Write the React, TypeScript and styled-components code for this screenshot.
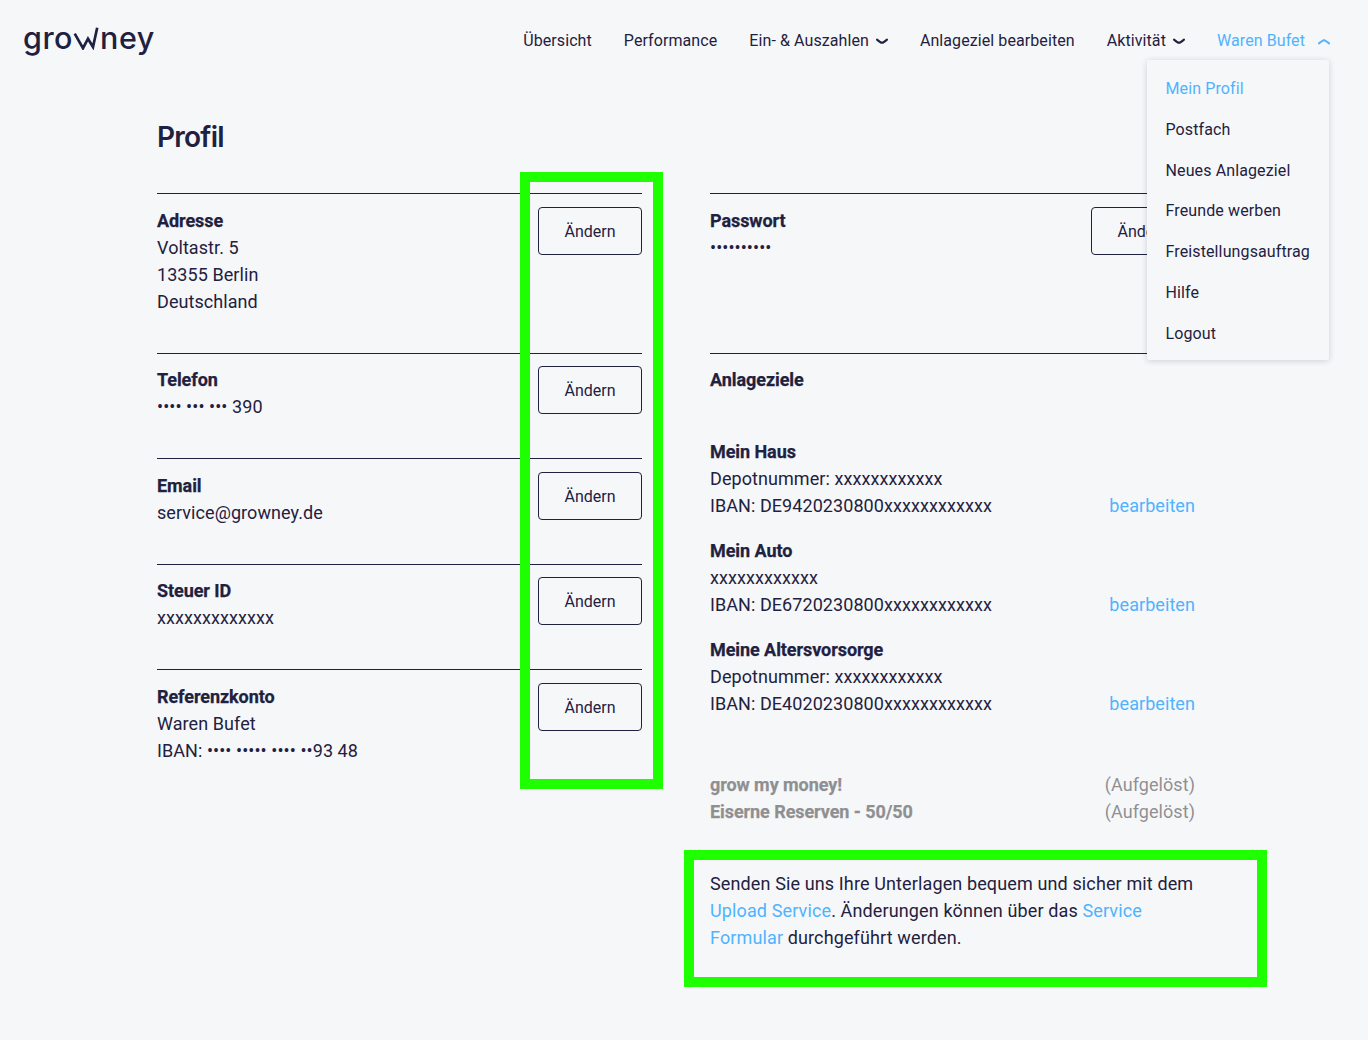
import React from "react";
import styled, { createGlobalStyle } from "styled-components";

const ink = "#1f2140";
const sky = "#4fb3ff";
const paper = "#f6f7f9";

const Global = createGlobalStyle`
  html, body { margin: 0; padding: 0; background: ${paper}; }
  body { font-family: Roboto, "Liberation Sans", sans-serif; color: ${ink}; }
  * { box-sizing: border-box; }
`;

const Page = styled.div`
  position: relative;
  width: 1368px;
  height: 1040px;
  overflow: hidden;
  background: ${paper};
`;

const Header = styled.header`
  display: flex;
  align-items: center;
  justify-content: space-between;
  height: 80px;
  padding: 0 38px 0 23px;
`;

const Logo = styled.div`
  display: flex;
  align-items: baseline;
  padding-bottom: 5px;
  font-family: Inter, sans-serif;
  font-size: 30.5px;
  font-weight: 500;
  line-height: 40px;
  color: ${ink};
  letter-spacing: 0.5px;
`;

const LogoW = styled.svg`
  width: 26px;
  height: 26px;
  margin: 0 1px 0 0;
  transform: translateY(1px);
`;

const Nav = styled.nav`
  display: flex;
  gap: 32px;
  margin-top: 2px;
  font-size: 16px;
  line-height: 24px;
  letter-spacing: 0.085px;
`;

const NavItem = styled.a<{ $active?: boolean }>`
  display: flex;
  align-items: center;
  color: ${(p) => (p.$active ? sky : ink)};
`;

const Chevron = styled.svg<{ $gap: number }>`
  width: 12px;
  height: 7px;
  margin-left: ${(p) => p.$gap}px;
  margin-top: 1px;
`;

const Menu = styled.ul`
  position: absolute;
  top: 60px;
  left: 1147px;
  width: 182px;
  height: 300px;
  margin: 0;
  padding: 9px 0 0 18.5px;
  list-style: none;
  background: ${paper};
  border-radius: 2px;
  box-shadow: 0 1px 6px rgba(31, 33, 64, 0.18);
  z-index: 2;
`;

const MenuItem = styled.li<{ $active?: boolean }>`
  height: 40.8px;
  line-height: 40.8px;
  font-size: 16px;
  letter-spacing: 0.12px;
  white-space: nowrap;
  color: ${(p) => (p.$active ? sky : ink)};
`;

const Main = styled.main`
  padding: 37px 0 0 157px;
`;

const Title = styled.h1`
  margin: 0 0 36px;
  font-family: Inter, sans-serif;
  font-size: 28px;
  font-weight: 600;
  line-height: 40px;
  letter-spacing: -0.75px;
`;

const Columns = styled.div`
  display: grid;
  grid-template-columns: 485px 485px;
  column-gap: 68px;
  align-items: start;
  font-size: 18px;
  line-height: 27px;
  letter-spacing: 0.07px;
`;

const Row = styled.section<{ $height: number }>`
  display: flex;
  justify-content: space-between;
  align-items: flex-start;
  height: ${(p) => p.$height}px;
  padding-top: 12.8px;
  border-top: 1px solid ${ink};
`;

const Label = styled.div`
  font-weight: 700;
  letter-spacing: -0.07px;
  -webkit-text-stroke: 0.25px currentColor;
`;

const Line = styled.div`
  white-space: nowrap;
`;

const EditButton = styled.button`
  width: 104px;
  height: 48px;
  padding: 0.6px 0 0;
  border: 1px solid ${ink};
  border-radius: 4px;
  background: transparent;
  color: ${ink};
  font-family: inherit;
  font-size: 16px;
`;

const GoalsHead = styled.div`
  height: 85.4px;
  padding-top: 12.8px;
  border-top: 1px solid ${ink};
`;

const Goal = styled.div`
  display: flex;
  justify-content: space-between;
  align-items: flex-end;
  margin-bottom: 18px;
`;

const Link = styled.a`
  color: ${sky};
`;

const Closed = styled.div`
  margin-top: 54px;
  opacity: 0.48;
  color: #20201f;
`;

const ClosedRow = styled.div`
  display: flex;
  justify-content: space-between;
`;

const Note = styled.p`
  margin: 45px 0 0;
  width: 500px;
  letter-spacing: 0.125px;
`;

const Marker = styled.div<{ $x: number; $y: number; $w: number; $h: number }>`
  position: absolute;
  left: ${(p) => p.$x}px;
  top: ${(p) => p.$y}px;
  width: ${(p) => p.$w}px;
  height: ${(p) => p.$h}px;
  border: 10px solid #1eff00;
  pointer-events: none;
  z-index: 1;
`;

const Down = () => (
  <Chevron $gap={7} viewBox="0 0 12 7">
    <path d="M1 1.6 C3.5 3.6 4.8 4.6 6 4.9 C7.2 4.6 8.5 3.6 11 1.6" fill="none" stroke={ink} strokeWidth="2" strokeLinecap="round" />
  </Chevron>
);

const Up = () => (
  <Chevron $gap={13} viewBox="0 0 12 7">
    <path d="M1 5.4 C3.5 3.4 4.8 2.4 6 2.1 C7.2 2.4 8.5 3.4 11 5.4" fill="none" stroke={sky} strokeWidth="2" strokeLinecap="round" />
  </Chevron>
);

const leftRows = [
  { label: "Adresse", lines: ["Voltastr. 5", "13355 Berlin", "Deutschland"], h: 159.6 },
  { label: "Telefon", lines: ["•••• ••• ••• 390"], h: 105.5 },
  { label: "Email", lines: ["service@growney.de"], h: 105.5 },
  { label: "Steuer ID", lines: ["xxxxxxxxxxxxx"], h: 105.5 },
  { label: "Referenzkonto", lines: ["Waren Bufet", "IBAN: •••• ••••• •••• ••93 48"], h: 105.5 },
];

const goals = [
  { name: "Mein Haus", sub: "Depotnummer: xxxxxxxxxxxx", iban: "IBAN: DE9420230800xxxxxxxxxxxx" },
  { name: "Mein Auto", sub: "xxxxxxxxxxxx", iban: "IBAN: DE6720230800xxxxxxxxxxxx" },
  { name: "Meine Altersvorsorge", sub: "Depotnummer: xxxxxxxxxxxx", iban: "IBAN: DE4020230800xxxxxxxxxxxx" },
];

const menu = ["Mein Profil", "Postfach", "Neues Anlageziel", "Freunde werben", "Freistellungsauftrag", "Hilfe", "Logout"];

export default function App() {
  return (
    <Page>
      <Global />
      <Header>
        <Logo>
          gro
          <LogoW viewBox="0 0 26 26">
            <path d="M1.7 9.7 L10 24.2 L15 14.7 L20 23 L24.2 3.7" fill="none" stroke={ink} strokeWidth="2.7" strokeLinejoin="miter" />
          </LogoW>
          ney
        </Logo>
        <Nav>
          <NavItem>Übersicht</NavItem>
          <NavItem>Performance</NavItem>
          <NavItem>Ein- &amp; Auszahlen<Down /></NavItem>
          <NavItem>Anlageziel bearbeiten</NavItem>
          <NavItem>Aktivität<Down /></NavItem>
          <NavItem $active>Waren Bufet<Up /></NavItem>
        </Nav>
      </Header>
      <Menu>
        {menu.map((m, i) => (
          <MenuItem key={m} $active={i === 0}>{m}</MenuItem>
        ))}
      </Menu>
      <Main>
        <Title>Profil</Title>
        <Columns>
          <div>
            {leftRows.map((r) => (
              <Row key={r.label} $height={r.h}>
                <div>
                  <Label>{r.label}</Label>
                  {r.lines.map((l) => (
                    <Line key={l}>{l}</Line>
                  ))}
                </div>
                <EditButton>Ändern</EditButton>
              </Row>
            ))}
          </div>
          <div>
            <Row $height={159.6}>
              <div>
                <Label>Passwort</Label>
                <Line>••••••••••</Line>
              </div>
              <EditButton>Ändern</EditButton>
            </Row>
            <GoalsHead><Label>Anlageziele</Label></GoalsHead>
            {goals.map((g) => (
              <Goal key={g.name}>
                <div>
                  <Label>{g.name}</Label>
                  <Line>{g.sub}</Line>
                  <Line>{g.iban}</Line>
                </div>
                <Link>bearbeiten</Link>
              </Goal>
            ))}
            <Closed>
              <ClosedRow><Label>grow my money!</Label><span>(Aufgelöst)</span></ClosedRow>
              <ClosedRow><Label>Eiserne Reserven - 50/50</Label><span>(Aufgelöst)</span></ClosedRow>
            </Closed>
            <Note>
              Senden Sie uns Ihre Unterlagen bequem und sicher mit dem <Link>Upload Service</Link>. Änderungen können über das <Link>Service</Link> <Link>Formular</Link> durchgeführt werden.
            </Note>
          </div>
        </Columns>
      </Main>
      <Marker $x={520} $y={172} $w={143} $h={617} />
      <Marker $x={684} $y={850} $w={583} $h={137} />
    </Page>
  );
}
